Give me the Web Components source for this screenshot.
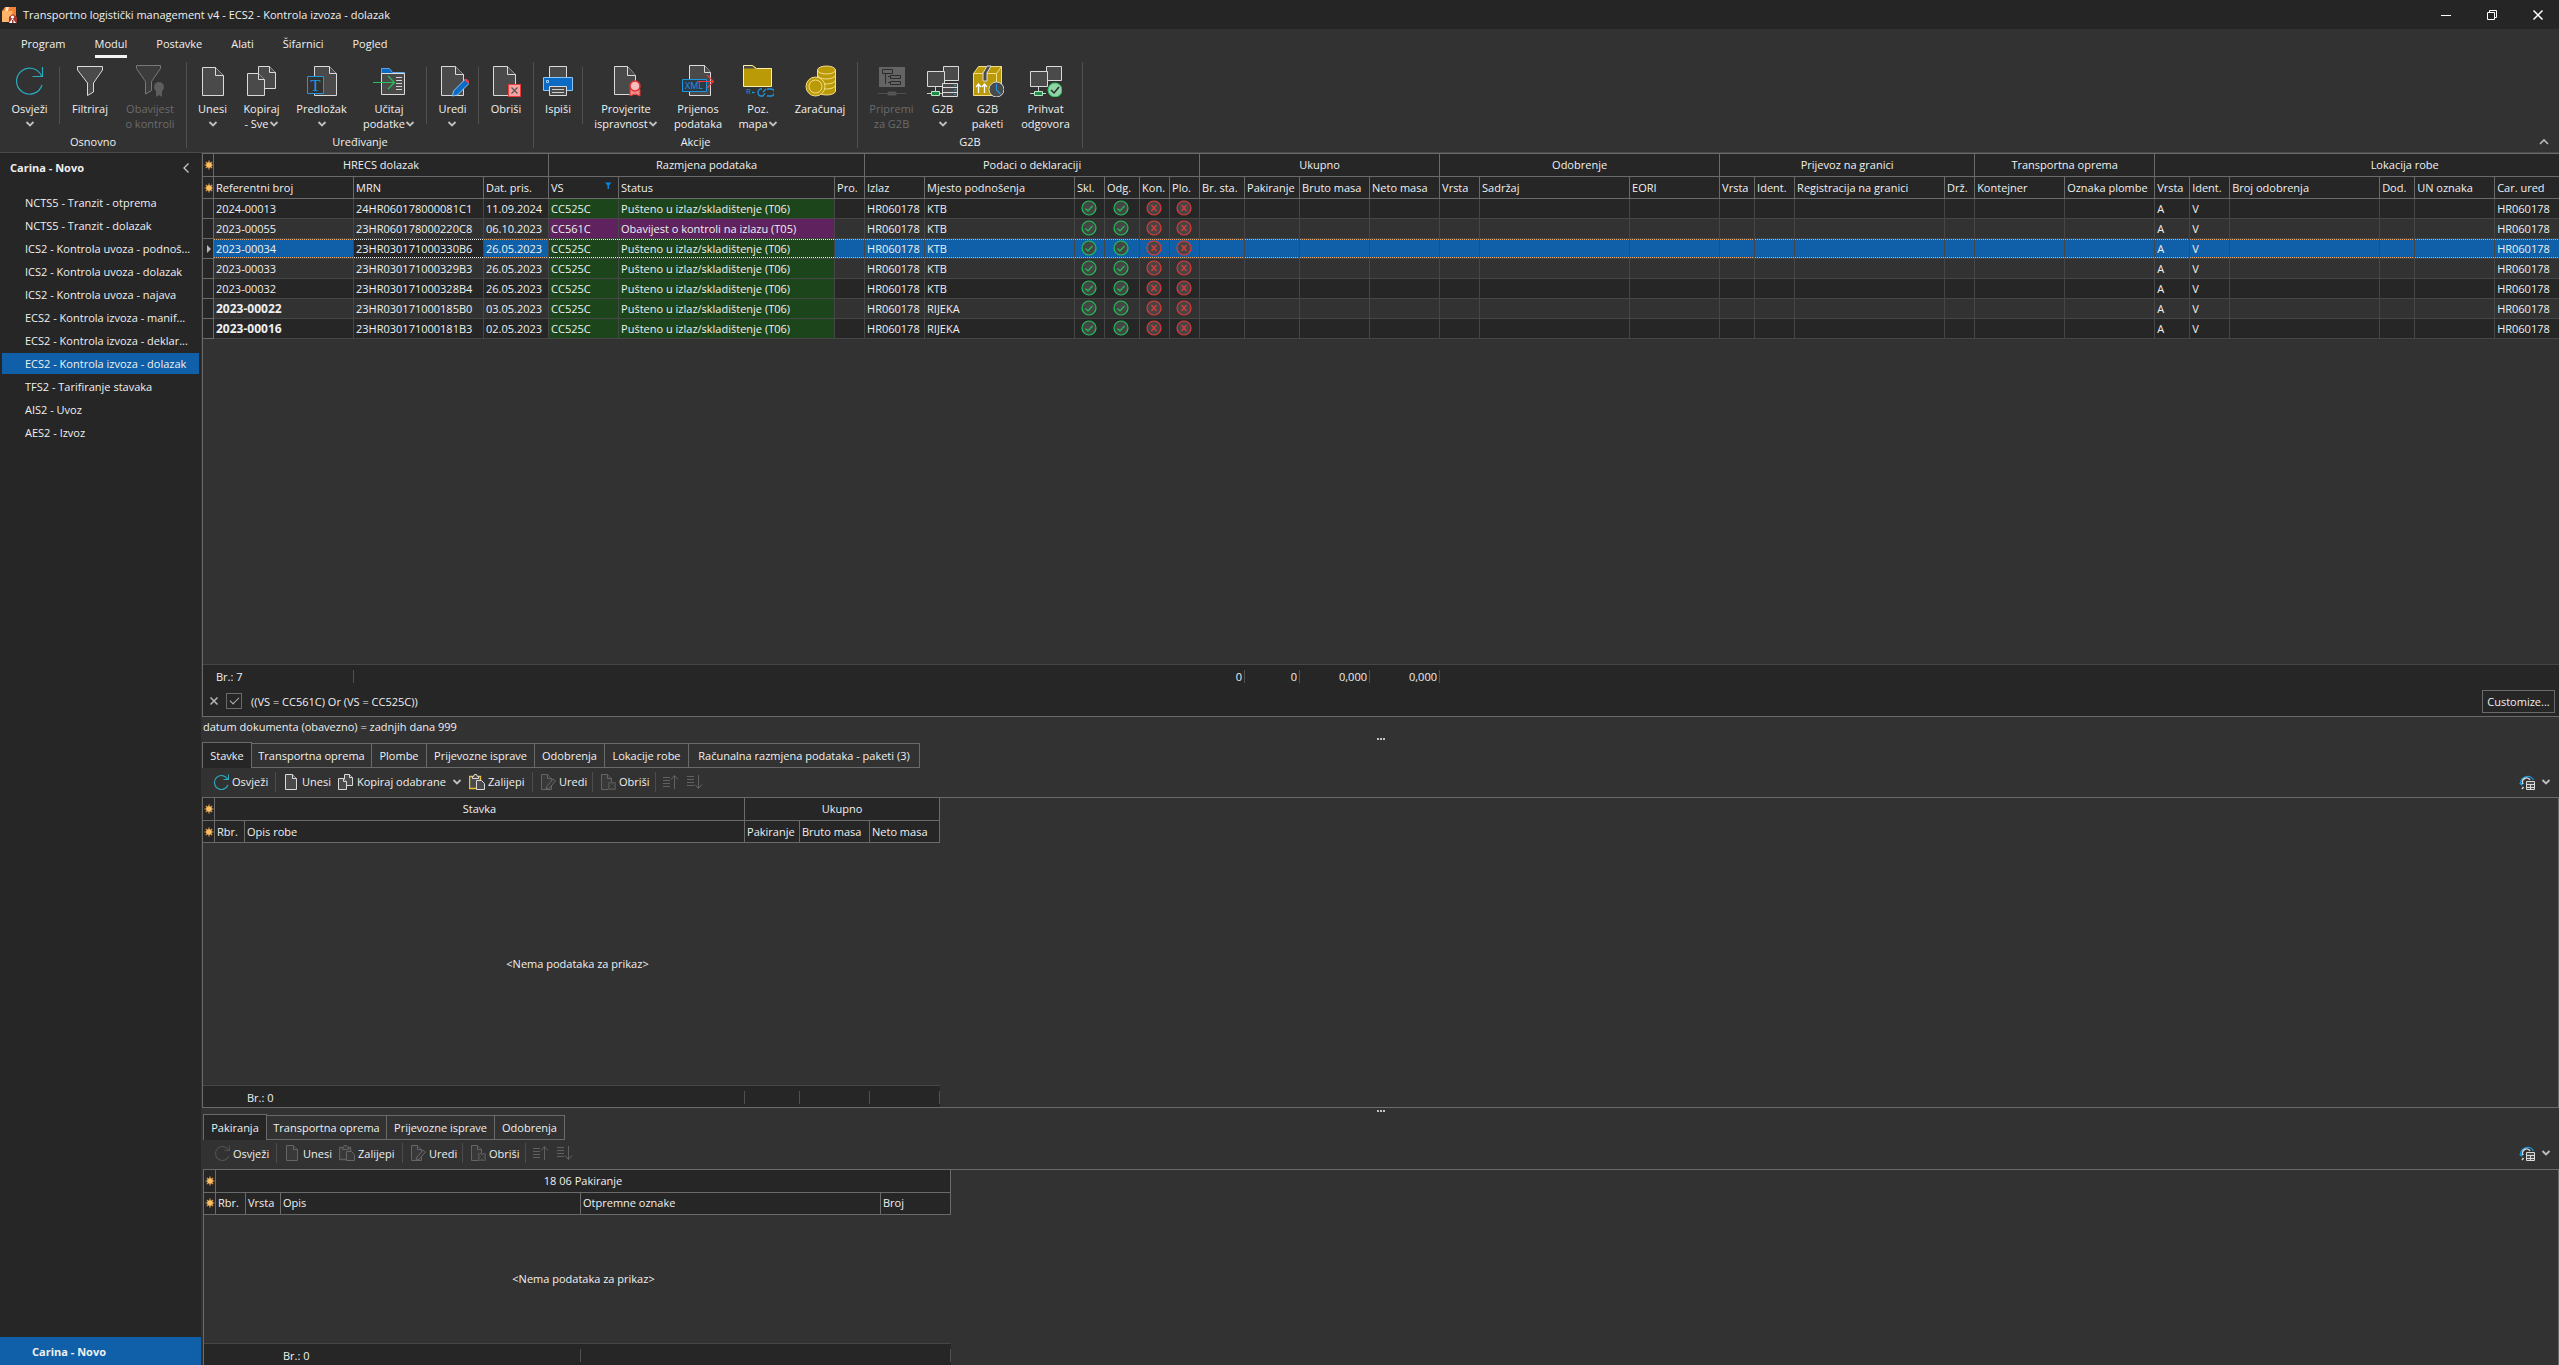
<!DOCTYPE html>
<html lang="hr">
<head>
<meta charset="utf-8">
<title>Transportno logistički management v4</title>
<style>
  html, body {
    margin: 0;
    height: 100%;
    background: #323232;
  }
</style>
</head>
<body>
<app-shell></app-shell>

<script>
const DOC = '<path class="p" d="M5.5 2.5h13l8 8v20h-21z"/><path class="p" d="M18.5 2.5v8h8"/>';
const DOC16 = '<path class="p" d="M2.5.5h7l4 4v11h-11z"/><path class="p" d="M9.5.5v4h4"/>';
const MONITORS = '<path class="p" d="M16.5 1.5h15v14h-15z"/><path class="l" d="M22 18.5h6"/><path class="p" d="M.5 6.5h17v15H.5z"/><path class="l" d="M8.5 22v5M0 28.5h16"/><path d="M4.5 26.5h8v4h-8z" fill="#1d8a47" stroke="#b8e6c8"/>';

const ICONS = {
  refresh: '<path d="M28 20A13 13 0 1 1 27.500 11M28.500 2v9.500h-10" fill="none" stroke="#2aa9bd" stroke-width="1.200"/>',
  filter: '<path class="p" d="M3.500 1.500h25v3.500l-9 13v9l-6 3.500v-12.500l-10-13z"/>',
  notice: '<path class="p" d="M2.500.5h24v3l-9 13v9l-6 3.500v-12.500l-9-13z"/><circle cx="25" cy="22" r="5" fill="#999"/><path d="M22 26v6l3-2 3 2v-6z" fill="#999"/>',
  doc: DOC,
  copy: '<path class="p" d="M12.500 1.500h11l6 6v16h-17z"/><path class="p" d="M23.500 1.500v6h6"/><path class="p" d="M1.500 8.500h11l6 6v16h-17z"/><path class="p" d="M12.500 8.500v6h6"/>',
  template: '<path class="p" d="M8.500 1.500h15l7 7v22h-22z"/><path class="p" d="M23.500 1.500v7h7"/><path d="M1.500 11.500h16v17h-16z" fill="#323232" stroke="#1c97e0"/><text x="9.500" y="26" font-family="Liberation Serif, serif" font-size="17" text-anchor="middle" fill="#1c97e0">T</text>',
  load: '<path d="M8.500 6V3.500h8l3 4h12v3h-23z" fill="#0b6ac4" stroke="#5aa7e8"/><path class="p" d="M8.500 8.500h23v21h-23z"/><path class="l" d="M23 12.500h6M23 15.500h6M23 18.500h6M23 21.500h6M23 24.500h6"/><path d="M0 17.500h21M15 11l6.500 6.500L15 24" fill="none" stroke="#25c45b" stroke-width="1.200"/>',
  edit: '<path class="p" d="M4.500 1.500h14l8 8v21h-22z"/><path class="p" d="M18.500 1.500v8h8"/><path d="M15.500 31l1-5L28 14.500l4 4L20.500 30z" fill="#0b6ac4" stroke="#8ec4f2"/><path d="M27.500 15l2-1.500 3 3-1.500 2z" fill="#ee3a3a"/>',
  remove: '<path class="p" d="M3.500 1.500h14l8 8v21h-22z"/><path class="p" d="M17.500 1.500v8h8"/><path d="M18.500 19.500h12v12h-12z" fill="#f5a3a3" stroke="#ee3a3a"/><path d="M21.500 22.500l6 6M27.500 22.500l-6 6" stroke="#555" stroke-width="1.200"/>',
  print: '<path class="p" d="M7.500 1.500h17v11h-17z"/><path d="M1.500 12.500h29v13h-29z" fill="#0b6ac4" stroke="#8ec4f2"/><path d="M4.500 15.500h2v2h-2z" fill="none" stroke="#9fd0fa"/><path class="p" d="M7.500 21.500h17v9h-17z"/><path class="l" d="M10 24.500h12M10 27.500h12"/>',
  verify: '<path class="p" d="M4.500 1.500h13l8 9v19h-21z"/><path class="p" d="M17.500 1.500v9h8"/><path d="M20 24v7l5-2 5 2v-7z" fill="#f58a8a" stroke="#e13131"/><circle cx="25" cy="21" r="5" fill="#f7bcbc" stroke="#e13131" stroke-width="1.500"/>',
  xml: '<path class="p" d="M7.500.5h15l6 7v23h-21z"/><path class="p" d="M22.500.5v7h6"/><path d="M.5 14.500h24v12H.5z" fill="#2b3a45" stroke="#1c97e0"/><text x="3" y="24" font-family="Open Sans, sans-serif" font-size="9" fill="#1c97e0">XML</text><path d="M15 16.500h16M25 10l6.500 6.500L25 23" fill="none" stroke="#f03a3a" stroke-width="1.200"/>',
  folder: '<path d="M1.500 3.500v-3h9l4 3h15v18h-28z" fill="#ba9a06" stroke="#fff0a8"/><path d="M2 1h8l3 2.500H2z" fill="#4a4a4a"/><text x="4" y="29" font-family="Open Sans, sans-serif" font-size="8" fill="#1c97e0">R</text><path d="M10 27.500h2.500M20 24h-2a4 4 0 0 0 0 7h3l2-3M25 24h4a3.500 3.500 0 0 1 0 7h-4M21 27l3-3" fill="none" stroke="#1c97e0" stroke-width="1.300"/>',
  coins: '<g fill="#ba9a06" stroke="#f5dc86"><path d="M13.500 5v21a9 4 0 0 0 18 0V5z"/><path d="M13.500 20a9 4 0 0 0 18 0M13.500 15a9 4 0 0 0 18 0M13.500 10a9 4 0 0 0 18 0" fill="none"/><ellipse cx="22.500" cy="5" rx="9" ry="4"/><circle cx="11.500" cy="21.500" r="9.500"/><circle cx="11.500" cy="21.500" r="6.500"/></g>',
  prepare: '<path d="M3 2h26v20H3z" fill="#aaa"/><g fill="none" stroke="#222"><path d="M6.500 4.500h10v4h-10zM9.500 9v10M12 11.500h2M12 17.500h2M14.500 10.500h10v3h-10zM14.500 16.500h10v3h-10z"/></g><path d="M2 28.500h28M12 27h8v3h-8z" fill="#aaa" stroke="#777"/>',
  g2b: MONITORS + '<path class="p" d="M15.500 18.500h15v13h-15zM15.500 22.500h15M15.500 27.500h15"/><path d="M27 20.500h2M27 25h2M27 29.500h2" stroke="#1c97e0"/>',
  packets: '<path d="M1.500 8.500l5-7h23v23l-5 6h-23z" fill="#ba9a06" stroke="#f5dc86"/><path d="M1.500 8.500h23l5-7M24.500 8.500v22" fill="none" stroke="#f5dc86"/><path d="M15 1l-4 7v8h4V8l4-7z" fill="#4a4a4a" stroke="#ddd"/><path d="M6.500 28v-8M4 22l2.500-3L9 22M12.500 28v-8M10 22l2.500-3 2.500 3" fill="none" stroke="#fff" stroke-width="1.300"/><circle cx="24.500" cy="24.500" r="7.500" fill="#4a4a4a" stroke="#d8d8d8"/><path d="M24.500 19v6l4 4" fill="none" stroke="#1c97e0" stroke-width="1.200"/>',
  accept: MONITORS + '<circle cx="25" cy="25" r="7" fill="#8fd3a6" stroke="#25c45b"/><path d="M21 25l3 3 5-6" fill="none" stroke="#2b2b2b" stroke-width="1.500"/>',

  refresh16: '<path d="M15 11A7 7 0 1 1 14.500 5M15.500.5v5h-5" fill="none" stroke="#2aa9bd" stroke-width="1.200"/>',
  doc16: DOC16,
  copy16: '<path class="p" d="M6.500.5h5l3 3v8h-8z"/><path class="p" d="M11.500.5v3h3"/><path class="p" d="M.5 4.500h5l3 3v8h-8z"/><path class="p" d="M5.500 4.500v3h3"/>',
  paste16: '<path d="M.5 2.500h11v12H.5z" fill="#4a4a4a" stroke="#f0c030" stroke-width="1.400"/><path class="p" d="M3.500 4.500v-2h1l1-2h2l1 2h1v2z"/><path class="p" d="M7.500 6.500h5l3 3v6h-8z"/>',
  edit16: '<path class="p" d="M1.500.5h6l4 4v11h-10z"/><path class="p" d="M7.500.5v4h4"/><path class="p" d="M6 15l1-3 6-7 2.500 2-6 7z"/>',
  remove16: '<path class="p" d="M1.500.5h6l4 4v11h-10z"/><path class="p" d="M7.500.5v4h4"/><path d="M8.500 8.500h7v7h-7z" fill="#777" stroke="#999"/><path d="M10 10l4 4M14 10l-4 4" stroke="#222"/>',
  up16: '<path class="l" d="M0 3.500h7M0 6.500h7M0 9.500h7M0 12.500h7M11.500 15V2M8 5.500l3.500-4 3.500 4" fill="none"/>',
  down16: '<path class="l" d="M0 2.500h7M0 5.500h7M0 8.500h7M0 11.500h7M11.500 1v13M8 10.500l3.500 4 3.500-4" fill="none"/>',
  layout16: '<path d="M1.500 10A7 7 0 0 1 14.500 6" fill="none" stroke="#1c97e0" stroke-width="1.200"/><path d="M0 9h5l-2.500 3z" fill="#1c97e0"/><path d="M3 15l1.500-2M4 10a4 4 0 0 1 7-4" fill="none" stroke="#d8d8d8" stroke-width="1.500"/><path class="p" d="M7.500 7.500h8v8h-8zM7.500 10.500h8M11.500 10v6M7.500 13.500h8"/>',

  down: '<path d="M4.500 6l3.500 3.500 3.500-3.500" fill="none" stroke="#c0c0c0" stroke-width="1.800"/>',
  upArrow: '<path d="M4 10l4-4 4 4" fill="none" stroke="#b8b8b8" stroke-width="1.600"/>',
  left: '<path d="M10.500 3.500L6 8l4.500 4.500" fill="none" stroke="#c8c8c8" stroke-width="1.300"/>',
  cross: '<path d="M4.500 4.500l7 7M11.500 4.500l-7 7" stroke="#b8b8b8" stroke-width="1.500"/>',
  minimize: '<path d="M3 8.500h10" stroke="#fff"/>',
  restore: '<path d="M3.500 5.500h7v7h-7zM5.500 5V3.500h7v7H11" fill="none" stroke="#fff"/>',
  close: '<path d="M3.500 3.500l9 9M12.500 3.500l-9 9" stroke="#fff" stroke-width="1.500"/>',
  sun: '<g stroke="#d99a45" stroke-width="1.200"><path d="M8 3.500v9M3.500 8h9M4.800 4.800l6.400 6.400M11.200 4.800l-6.400 6.400"/></g><circle cx="8" cy="8" r="2.800" fill="#ffbe62"/>',
  current: '<path d="M6 4l4 4-4 4z" fill="#b8b8b8"/>',
  funnel: '<path d="M5 3.500h6.500l-2.500 3V10H7.500V6.500z" fill="#0a84e0"/>',
  ok: '<circle cx="8" cy="8" r="7" fill="#454545" stroke="#20c15a" stroke-width="1.200"/><path d="M4.500 8.500l2.500 2.500 4.500-5" fill="none" stroke="#20c15a" stroke-width="1.200"/>',
  bad: '<circle cx="8" cy="8" r="7" fill="#454545" stroke="#e03a3a" stroke-width="1.200"/><path d="M5.500 5l5 6M10.500 5l-5 6" stroke="#e03a3a" stroke-width="1.200"/>',
  app: '<path d="M1 4l3-4h11v11l-3 4H1z" fill="#f58233"/><path d="M1 4h10.500v11H1z" fill="#ffb469"/><path d="M5 0h3L7 4H4z" fill="#ffe2c0"/><path d="M8 16V10l3.500-3L16 10v6z" fill="#a03a30"/><circle cx="11.500" cy="10" r="1.600" fill="#fff"/><path d="M8 16l3.500-4.500L15 16z" fill="#fff"/><path d="M11 13h1.500v3H11z" fill="#a03a30"/>'
};

class UiIcon extends HTMLElement {
  connectedCallback() {
    const size = this.getAttribute('size') || 16;
    const root = this.shadowRoot || this.attachShadow({ mode: 'open' });
    root.innerHTML = `
      <style>
        :host { display: inline-block; flex: none; width: ${size}px; height: ${size}px; }
        :host([off]) { filter: grayscale(1); opacity: 0.3; }
        :host([off][size="32"]) { opacity: 0.42; }
        svg { display: block; }
        .p { fill: #4a4a4a; stroke: #dadada; }
        .l { stroke: #cfcfcf; }
      </style>
      <svg width="${size}" height="${size}" viewBox="0 0 ${size} ${size}" aria-hidden="true">${ICONS[this.getAttribute('name')]}</svg>
    `;
  }
}
customElements.define('ui-icon', UiIcon);

class TitleBar extends HTMLElement {
  constructor() {
    super();
    this.attachShadow({ mode: 'open' });
    this.shadowRoot.innerHTML = `
      <style>
        :host { display: flex; align-items: center; height: 29px; padding-left: 1px; background: #252525; }
        .title { flex: 1; margin-left: 6px; padding-bottom: 1px; }
        .controls { display: flex; gap: 4px; }
        button { display: grid; place-items: center; width: 42px; height: 29px; padding: 0; border: 0; background: none; }
      </style>
      <ui-icon name="app"></ui-icon>
      <span class="title"><slot></slot></span>
      <div class="controls">
        <button aria-label="Minimize"><ui-icon name="minimize"></ui-icon></button>
        <button aria-label="Restore"><ui-icon name="restore"></ui-icon></button>
        <button aria-label="Close"><ui-icon name="close"></ui-icon></button>
      </div>
    `;
  }
}
customElements.define('title-bar', TitleBar);

class MenuBar extends HTMLElement {
  constructor() {
    super();
    this.attachShadow({ mode: 'open' });
    const items = ['Program', 'Modul', 'Postavke', 'Alati', 'Šifarnici', 'Pogled'];
    this.shadowRoot.innerHTML = `
      <style>
        :host { display: block; }
        nav { display: flex; gap: 29px; height: 29px; padding-left: 21px; }
        button { padding: 3px 0 0; border: 0; border-bottom: 3px solid transparent; background: none; color: inherit; font: inherit; }
        .active { border-color: #f4f4f4; }
      </style>
      <nav>${items.map(t => `<button class="${t === 'Modul' ? 'active' : ''}">${t}</button>`).join('')}</nav>
    `;
  }
}
customElements.define('menu-bar', MenuBar);

/* label, icon, width, options; null is a separator inside the group */
const RIBBON = [
  { title: 'Osnovno', items: [
    ['Osvježi', 'refresh', 53, 'drop'], null,
    ['Filtriraj', 'filter', 54], ['Obavijest|o kontroli', 'notice', 66, 'off']] },
  { title: 'Uređivanje', items: [
    ['Unesi', 'doc', 45, 'drop'], ['Kopiraj|- Sve', 'copy', 53, 'drop'],
    ['Predložak', 'template', 67, 'drop'], ['Učitaj|podatke', 'load', 68, 'drop'], null,
    ['Uredi', 'edit', 45, 'drop'], null, ['Obriši', 'remove', 48]] },
  { title: 'Akcije', items: [
    ['Ispiši', 'print', 42], null, ['Provjerite|ispravnost', 'verify', 80, 'drop'],
    ['Prijenos|podataka', 'xml', 64], ['Poz.|mapa', 'folder', 56, 'drop'], ['Zaračunaj', 'coins', 68]] },
  { title: 'G2B', items: [
    ['Pripremi|za G2B', 'prepare', 61, 'off'], ['G2B', 'g2b', 41, 'drop'],
    ['G2B|paketi', 'packets', 49], ['Prihvat|odgovora', 'accept', 67]] }
];

class RibbonBar extends HTMLElement {
  constructor() {
    super();
    this.attachShadow({ mode: 'open' });
    this.shadowRoot.innerHTML = `
      <style>
        :host { display: flex; height: 94px; border-bottom: 1px solid #4a4a4a; }
        .group { display: flex; flex-direction: column; padding: 0 3px; }
        .items { display: flex; flex: 1; padding-top: 7px; }
        .title { padding-bottom: 3px; line-height: 15px; text-align: center; }
        .end { width: 1px; margin: 4px 0; background: #505050; }
        .sep { width: 1px; height: 57px; margin: 2px 3px 0; background: #505050; }
        button { display: flex; flex-direction: column; align-items: center; gap: 4px; padding: 0; border: 0; background: none; color: inherit; font: inherit; line-height: 15px; white-space: nowrap; }
        button:disabled { color: #6b6b6b; }
        .label { display: flex; flex-direction: column; align-items: center; }
        .line { display: flex; align-items: center; height: 15px; }
        .line ui-icon { margin: 0 -3px; }
        .fill { flex: 1; }
        .collapse { align-self: flex-end; width: 30px; height: 18px; }
      </style>
      ${RIBBON.map(g => `
        <div class="group">
          <div class="items">${g.items.map(i => this.item(i)).join('')}</div>
          <div class="title">${g.title}</div>
        </div>
        <div class="end"></div>
      `).join('')}
      <span class="fill"></span>
      <button class="collapse" aria-label="Collapse ribbon"><ui-icon name="upArrow"></ui-icon></button>
    `;
  }

  item(item) {
    if (!item) return '<div class="sep"></div>';
    const [text, icon, width, option] = item;
    const off = option === 'off';
    const lines = text.split('|');
    const arrow = '<ui-icon name="down"></ui-icon>';
    let html = `<span class="line">${lines[0]}</span>`;
    if (lines[1]) html += `<span class="line">${lines[1]}${option === 'drop' ? arrow : ''}</span>`;
    else if (option === 'drop') html += `<span class="line">${arrow}</span>`;
    return `
      <button style="width: ${width}px" ${off ? 'disabled' : ''}>
        <ui-icon name="${icon}" size="32" ${off ? 'off' : ''}></ui-icon>
        <span class="label">${html}</span>
      </button>`;
  }
}
customElements.define('ribbon-bar', RibbonBar);

class ModuleNav extends HTMLElement {
  constructor() {
    super();
    this.attachShadow({ mode: 'open' });
    const items = [
      'NCTS5 - Tranzit - otprema', 'NCTS5 - Tranzit - dolazak',
      'ICS2 - Kontrola uvoza - podnoš...', 'ICS2 - Kontrola uvoza - dolazak',
      'ICS2 - Kontrola uvoza - najava', 'ECS2 - Kontrola izvoza - manif...',
      'ECS2 - Kontrola izvoza - deklar...', 'ECS2 - Kontrola izvoza - dolazak',
      'TFS2 - Tarifiranje stavaka', 'AIS2 - Uvoz', 'AES2 - Izvoz'
    ];
    this.shadowRoot.innerHTML = `
      <style>
        :host { display: flex; flex-direction: column; background: #262626; }
        header { display: flex; align-items: center; justify-content: space-between; height: 29px; padding: 0 7px 0 10px; font-weight: bold; }
        header button { padding: 0; border: 0; background: none; line-height: 0; }
        nav { display: flex; flex-direction: column; flex: 1; gap: 2px; padding: 10px 2px 0; }
        a { padding-left: 23px; line-height: 21px; color: inherit; text-decoration: none; white-space: nowrap; }
        .active { background: #0f60a8; }
        footer { padding: 1px 0 0 32px; background: #0f60a8; font-weight: bold; line-height: 27px; }
      </style>
      <header>Carina - Novo<button aria-label="Collapse"><ui-icon name="left"></ui-icon></button></header>
      <nav>${items.map((t, i) => `<a href="#" class="${i === 7 ? 'active' : ''}">${t}</a>`).join('')}</nav>
      <footer>Carina - Novo</footer>
    `;
  }
}
customElements.define('module-nav', ModuleNav);

class TabStrip extends HTMLElement {
  constructor() {
    super();
    this.attachShadow({ mode: 'open' });
  }

  setTabs(tabs) {
    this.shadowRoot.innerHTML = `
      <style>
        :host { display: flex; align-items: flex-end; height: 26px; }
        button { box-sizing: border-box; height: 25px; padding: 0; border: 1px solid #6a6a6a; border-left-width: 0; background: none; color: inherit; font: inherit; white-space: nowrap; }
        .active { height: 26px; border-left-width: 1px; border-bottom: 0; background: #262626; }
      </style>
      ${tabs.map(([text, width], i) => `<button role="tab" class="${i ? '' : 'active'}" style="width: ${width}px">${text}</button>`).join('')}
    `;
  }
}
customElements.define('tab-strip', TabStrip);

class ToolStrip extends HTMLElement {
  constructor() {
    super();
    this.attachShadow({ mode: 'open' });
  }

  setTools(tools) {
    this.shadowRoot.innerHTML = `
      <style>
        :host { display: flex; align-items: center; box-sizing: border-box; height: 29px; padding: 0 1px 2px 7px; }
        button { box-sizing: border-box; display: flex; align-items: center; gap: 3px; padding: 0 4px; border: 0; background: none; color: inherit; font: inherit; white-space: nowrap; }
        .sep { width: 1px; height: 20px; margin: 0 3px; background: #4c4c4c; }
        .fill { flex: 1; }
      </style>
      ${tools.map(t => t ? `
        <button style="width: ${t[2]}px" aria-label="${t[0] || t[1]}">
          <ui-icon name="${t[1]}" ${t[3] === 'off' ? 'off' : ''}></ui-icon>${t[0]}
          ${t[3] === 'drop' ? '<ui-icon name="down"></ui-icon>' : ''}
        </button>` : '<span class="sep"></span>').join('')}
      <span class="fill"></span>
      <button aria-label="Layout"><ui-icon name="layout16"></ui-icon><ui-icon name="down"></ui-icon></button>
    `;
  }
}
customElements.define('tool-strip', ToolStrip);

class DataGrid extends HTMLElement {
  constructor() {
    super();
    this.attachShadow({ mode: 'open' });
  }

  /* config: indicator, bands [title, span], columns [title, width], rows, wide, empty, totals */
  setConfig(config) {
    const width = config.indicator + config.columns.reduce((sum, c) => sum + c[1], 0);
    const tracks = [config.indicator, ...config.columns.map(c => c[1])].map(w => w + 'px').join(' ');

    this.shadowRoot.innerHTML = `
      <style>
        :host { display: flex; flex-direction: column; min-height: 0; border: 1px solid #6a6a6a; border-right-width: ${config.wide ? 0 : 1}px; box-sizing: border-box; overflow: hidden; }
        table { table-layout: fixed; width: ${width}px; border-spacing: 0; }
        th, td { box-sizing: border-box; padding: 0 2px 1px; border-right: 1px solid #464646; border-bottom: 1px solid #464646; overflow: hidden; text-align: left; font-weight: normal; white-space: nowrap; line-height: 15px; }
        th { border-color: #6a6a6a; background: #262626; }
        .bands th { height: 23px; text-align: center; }
        .heads th { height: 22px; }
        td { height: 20px; background: #262626; }
        tr:nth-child(even) td { background: #323232; }
        tr .mark, tr:nth-child(even) .mark { padding: 0; border-color: #6a6a6a; background: #262626; }
        .mark ui-icon { display: block; margin: 0 auto; width: 11px; transform: translateX(-2px); }
        tr td.green { background: #1c451c; }
        tr:nth-child(even) td.purple { background: #5f225f; }
        .icon { padding: 0 2px 2px 0; text-align: center; line-height: 0; }
        .strong { font-size: 12px; font-weight: bold; }
        tr.focused td:not(.mark) { background-image: repeating-linear-gradient(90deg, #e8a870 0 1px, transparent 1px 2px), repeating-linear-gradient(90deg, #e8a870 0 1px, transparent 1px 2px); background-size: 100% 1px; background-position: top, bottom; background-repeat: no-repeat; background-color: #0f60a8; }
        tr.focused td.green, tr.focused td.dark { background-image: repeating-linear-gradient(90deg, #f0f0f0 0 1px, transparent 1px 2px), repeating-linear-gradient(90deg, #f0f0f0 0 1px, transparent 1px 2px); }
        tr.focused td.green:not(.mark) { background-color: #1c451c; }
        tr.focused td.dark:not(.mark) { background-color: #262626; }
        .head { display: flex; align-items: center; justify-content: space-between; height: 15px; }
        .body { flex: 1; display: grid; place-items: center; box-sizing: border-box; width: ${width}px; padding-left: ${config.indicator}px; }
        .totals { display: grid; grid-template-columns: ${tracks}; width: ${config.wide ? '100%' : width + 'px'}; box-sizing: border-box; height: ${config.wide ? 25 : 22}px; flex: none; padding-top: 5px; border-top: 1px solid #464646; background: #262626; }
        .totals span { box-sizing: border-box; height: 13px; padding: 0 2px; line-height: 13px; white-space: nowrap; }
        .totals .line { border-right: 1px solid #505050; }
        .totals .right { text-align: right; }
      </style>
      <table>
        <colgroup><col style="width: ${config.indicator}px">${config.columns.map(c => `<col style="width: ${c[1]}px">`).join('')}</colgroup>
        <thead>
          <tr class="bands"><th class="mark"><ui-icon name="sun"></ui-icon></th>${config.bands.map(b => `<th colspan="${b[1]}">${b[0]}</th>`).join('')}</tr>
          <tr class="heads"><th class="mark"><ui-icon name="sun"></ui-icon></th>${config.columns.map(c => c[2]
            ? `<th><div class="head">${c[0]}<ui-icon name="${c[2]}"></ui-icon></div></th>` : `<th>${c[0]}</th>`).join('')}</tr>
        </thead>
        <tbody>${(config.rows || []).map(r => this.row(r)).join('')}</tbody>
      </table>
      <div class="body">${config.empty ? '&lt;Nema podataka za prikaz&gt;' : ''}</div>
      <div class="totals"><span></span>${config.columns.map((c, i) => {
        const total = config.totals[i];
        if (total === undefined) return '<span></span>';
        return `<span class="${total[1]}">${total[0]}</span>`;
      }).join('')}</div>
      <slot></slot>
    `;
  }

  row(row) {
    const cells = row.cells.map(cell => {
      const [text, cls] = Array.isArray(cell) ? cell : [cell, ''];
      return cls === 'icon' ? `<td class="icon"><ui-icon name="${text}"></ui-icon></td>` : `<td class="${cls}">${text}</td>`;
    }).join('');
    return `<tr class="${row.focused ? 'focused' : ''}"><td class="mark">${row.focused ? '<ui-icon name="current"></ui-icon>' : ''}</td>${cells}</tr>`;
  }
}
customElements.define('data-grid', DataGrid);

class FilterPanel extends HTMLElement {
  constructor() {
    super();
    this.attachShadow({ mode: 'open' });
    this.shadowRoot.innerHTML = `
      <style>
        :host { display: flex; align-items: center; box-sizing: border-box; height: 27px; padding: 0 4px 3px 3px; background: #262626; }
        button { padding: 0; border: 0; background: none; color: inherit; font: inherit; line-height: 0; }
        label { display: flex; flex: 1; align-items: center; gap: 9px; margin-left: 4px; }
        input { appearance: none; display: grid; place-items: center; box-sizing: border-box; width: 16px; height: 16px; margin: 0; border: 1px solid #6a6a6a; }
        input:checked::before { content: ""; width: 8px; height: 4px; margin-top: -4px; border: solid #b8b8b8; border-width: 0 0 1px 1px; transform: rotate(-45deg); }
        .customize { width: 73px; height: 23px; border: 1px solid #6a6a6a; line-height: 15px; }
      </style>
      <button aria-label="Close filter"><ui-icon name="cross"></ui-icon></button>
      <label><input type="checkbox" checked><slot></slot></label>
      <button class="customize">Customize...</button>
    `;
  }
}
customElements.define('filter-panel', FilterPanel);

class SplitHandle extends HTMLElement {
  constructor() {
    super();
    this.attachShadow({ mode: 'open' });
    this.shadowRoot.innerHTML = `
      <style>
        :host { display: flex; flex-direction: column; flex: none; }
        .text { flex: 1; padding: 2px 1px 0; line-height: 15px; }
        .text:not(.filled) { padding: 0; }
        .dots { display: flex; justify-content: center; gap: 1px; height: 2px; padding: 2px 0; }
        i { width: 2px; background: #c4c4c4; }
      </style>
      <div class="text ${this.hasAttribute('caption') ? 'filled' : ''}"><slot></slot></div>
      <div class="dots"><i></i><i></i><i></i></div>
    `;
  }
}
customElements.define('split-handle', SplitHandle);

const OK = ['ok', 'icon'];
const BAD = ['bad', 'icon'];

function shipment(ref, mrn, date, vs, place, options = {}) {
  const released = vs === 'CC525C';
  const colour = released ? 'green' : 'purple';
  return {
    focused: options.focused,
    cells: [
      [ref, options.strong ? 'strong' : ''], [mrn, options.focused ? 'dark' : ''], date,
      [vs, colour], [released ? 'Pušteno u izlaz/skladištenje (T06)' : 'Obavijest o kontroli na izlazu (T05)', colour], '',
      'HR060178', place, OK, OK, BAD, BAD,
      '', '', '', '', '', '', '', '', '', '', '', '', '', 'A', 'V', '', '', '', 'HR060178'
    ]
  };
}

const ARRIVALS = {
  indicator: 11,
  wide: true,
  bands: [['HRECS dolazak', 3], ['Razmjena podataka', 3], ['Podaci o deklaraciji', 6], ['Ukupno', 4],
    ['Odobrenje', 3], ['Prijevoz na granici', 4], ['Transportna oprema', 2], ['Lokacija robe', 6]],
  columns: [
    ['Referentni broj', 140], ['MRN', 130], ['Dat. pris.', 65],
    ['VS', 70, 'funnel'], ['Status', 216], ['Pro.', 30],
    ['Izlaz', 60], ['Mjesto podnošenja', 150], ['Skl.', 30], ['Odg.', 35], ['Kon.', 30], ['Plo.', 30],
    ['Br. sta.', 45], ['Pakiranje', 55], ['Bruto masa', 70], ['Neto masa', 70],
    ['Vrsta', 40], ['Sadržaj', 150], ['EORI', 90],
    ['Vrsta', 35], ['Ident.', 40], ['Registracija na granici', 150], ['Drž.', 30],
    ['Kontejner', 90], ['Oznaka plombe', 90],
    ['Vrsta', 35], ['Ident.', 40], ['Broj odobrenja', 150], ['Dod.', 35], ['UN oznaka', 80], ['Car. ured', 160]
  ],
  rows: [
    shipment('2024-00013', '24HR060178000081C1', '11.09.2024', 'CC525C', 'KTB'),
    shipment('2023-00055', '23HR060178000220C8', '06.10.2023', 'CC561C', 'KTB'),
    shipment('2023-00034', '23HR030171000330B6', '26.05.2023', 'CC525C', 'KTB', { focused: true }),
    shipment('2023-00033', '23HR030171000329B3', '26.05.2023', 'CC525C', 'KTB'),
    shipment('2023-00032', '23HR030171000328B4', '26.05.2023', 'CC525C', 'KTB'),
    shipment('2023-00022', '23HR030171000185B0', '03.05.2023', 'CC525C', 'RIJEKA', { strong: true }),
    shipment('2023-00016', '23HR030171000181B3', '02.05.2023', 'CC525C', 'RIJEKA', { strong: true })
  ],
  totals: { 0: ['Br.: 7', 'line'], 12: ['0', 'line right'], 13: ['0', 'line right'], 14: ['0,000', 'line right'], 15: ['0,000', 'line right'] }
};

const ITEMS = {
  indicator: 12,
  empty: true,
  bands: [['Stavka', 2], ['Ukupno', 3]],
  columns: [['Rbr.', 30], ['Opis robe', 500], ['Pakiranje', 55], ['Bruto masa', 70], ['Neto masa', 70]],
  totals: { 1: ['Br.: 0', 'line'], 2: ['', 'line'], 3: ['', 'line'], 4: ['', 'line'] }
};

const PACKAGES = {
  indicator: 12,
  empty: true,
  bands: [['18 06 Pakiranje', 5]],
  columns: [['Rbr.', 30], ['Vrsta', 35], ['Opis', 300], ['Otpremne oznake', 300], ['Broj', 70]],
  totals: { 2: ['Br.: 0', 'line'], 4: ['', 'line'] }
};

class AppShell extends HTMLElement {
  constructor() {
    super();
    this.attachShadow({ mode: 'open' });
    this.shadowRoot.innerHTML = `
      <style>
        :host { display: flex; flex-direction: column; height: 100vh; overflow: hidden; background: #323232; color: #f0f0f0; font-family: "Open Sans", "Noto Sans", sans-serif; font-size: 11px; }
        .content { display: flex; flex: 1; min-height: 0; }
        module-nav { flex: none; width: 201px; }
        main { display: flex; flex: 1; flex-direction: column; min-width: 0; padding-left: 1px; }
        #arrivals { flex: 564 0 0; }
        #items { flex: 310 0 0; }
        .packages { display: flex; flex: 252 0 0; flex-direction: column; min-height: 0; padding-left: 1px; }
        #packages { flex: 1; border-bottom: 0; }
        split-handle { height: 6px; }
        split-handle[caption] { height: 25px; }
        tab-strip, tool-strip { flex: none; }
      </style>
      <title-bar>Transportno logistički management v4 - ECS2 - Kontrola izvoza - dolazak</title-bar>
      <menu-bar></menu-bar>
      <ribbon-bar></ribbon-bar>
      <div class="content">
        <module-nav></module-nav>
        <main>
          <data-grid id="arrivals">
            <filter-panel>((VS = CC561C) Or (VS = CC525C))</filter-panel>
          </data-grid>
          <split-handle caption>datum dokumenta (obavezno) = zadnjih dana 999</split-handle>
          <tab-strip id="itemTabs"></tab-strip>
          <tool-strip id="itemTools"></tool-strip>
          <data-grid id="items"></data-grid>
          <split-handle></split-handle>
          <section class="packages">
            <tab-strip id="packageTabs"></tab-strip>
            <tool-strip id="packageTools"></tool-strip>
            <data-grid id="packages"></data-grid>
          </section>
        </main>
      </div>
    `;
    const find = id => this.shadowRoot.getElementById(id);
    find('arrivals').setConfig(ARRIVALS);
    find('items').setConfig(ITEMS);
    find('packages').setConfig(PACKAGES);
    find('itemTabs').setTabs([['Stavke', 50], ['Transportna oprema', 120], ['Plombe', 55], ['Prijevozne isprave', 108],
      ['Odobrenja', 70], ['Lokacije robe', 84], ['Računalna razmjena podataka - paketi (3)', 231]]);
    find('packageTabs').setTabs([['Pakiranja', 64], ['Transportna oprema', 120], ['Prijevozne isprave', 108], ['Odobrenja', 70]]);
    find('itemTools').setTools([
      ['Osvježi', 'refresh16', 63], null,
      ['Unesi', 'doc16', 55], ['Kopiraj odabrane', 'copy16', 131, 'drop'], ['Zalijepi', 'paste16', 64], null,
      ['Uredi', 'edit16', 53, 'off'], null, ['Obriši', 'remove16', 56, 'off'], null,
      ['', 'up16', 24, 'off'], ['', 'down16', 24, 'off']
    ]);
    find('packageTools').setTools([
      ['Osvježi', 'refresh16', 63, 'off'], null,
      ['Unesi', 'doc16', 55, 'off'], ['Zalijepi', 'paste16', 64, 'off'], null,
      ['Uredi', 'edit16', 53, 'off'], null, ['Obriši', 'remove16', 56, 'off'], null,
      ['', 'up16', 24, 'off'], ['', 'down16', 24, 'off']
    ]);
  }
}
customElements.define('app-shell', AppShell);
</script>
</body>
</html>
